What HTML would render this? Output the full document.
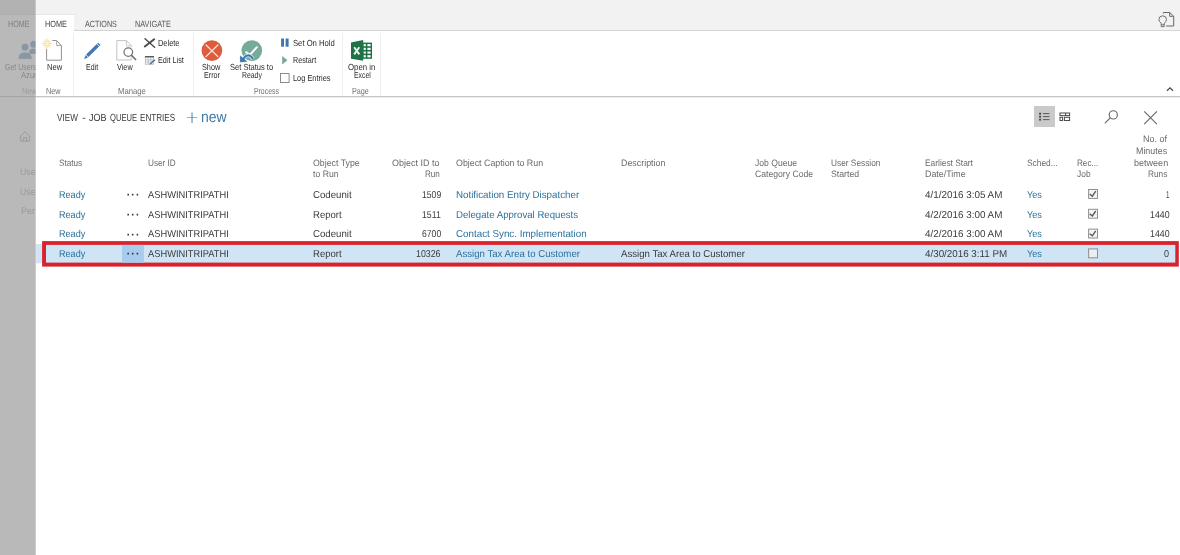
<!DOCTYPE html>
<html lang="en">
<head>
<meta charset="utf-8">
<title>View - Job Queue Entries</title>
<style>
html,body{margin:0;padding:0;}
body{width:1180px;height:555px;position:relative;overflow:hidden;background:#fff;font-family:"Liberation Sans",sans-serif;text-rendering:geometricPrecision;}
#page{position:absolute;left:0;top:0;width:1180px;height:555px;overflow:hidden;background:#fff;will-change:transform;}
.abs{position:absolute;}
.t{position:absolute;line-height:1;white-space:nowrap;transform-origin:0 50%;}
#topbar{left:0;top:0;width:1180px;height:30px;background:#f2f2f2;}
#tabline{left:0;top:30px;width:1180px;height:1px;background:#d4d4d4;}
#acttab{left:36px;top:15px;width:38px;height:16px;background:#fff;}
#acttabtop{left:36px;top:14px;width:40px;height:1px;background:#e6e6e6;}
#ribline{left:0;top:96px;width:1180px;height:1px;background:#c6c6c6;}
#ribline2{left:0;top:97px;width:1180px;height:1px;background:#ececec;}
.sep{position:absolute;top:33px;width:1px;height:63px;background:#efefef;}
#selstrip{left:36px;top:244.1px;width:7px;height:19.2px;background:#d2e5f5;}
#selrow{left:42px;top:241px;width:1137px;height:25.6px;box-sizing:border-box;border:4px solid #da222d;background:#cfe4f5;}
#selcell{left:122px;top:244.5px;width:21.7px;height:18.3px;background:#a8ccee;}
#viewbox{left:1034px;top:106px;width:21px;height:21px;background:#cacaca;}
.cb{position:absolute;width:8.7px;height:8.7px;border:1px solid #9a9a9a;background:#fff;box-sizing:border-box;}
#overlay{left:0;top:0;width:36px;height:555px;overflow:hidden;background:#b9b9b9;}
#ovtop{left:0;top:0;width:36px;height:14px;background:#b2b2b2;}
#ovtabline{left:0;top:14px;width:36px;height:1px;background:#adadad;}
#ovribline{left:0;top:96px;width:36px;height:1px;background:#a3a3a3;}
svg{position:absolute;overflow:visible;}
</style>
</head>
<body>
<div id="page">
<div class="abs" id="topbar"></div>
<div class="abs" id="tabline"></div>
<div class="abs" id="acttab"></div>
<div class="abs" id="acttabtop"></div>
<div class="abs" id="ribline"></div>
<div class="abs" id="ribline2"></div>
<div class="sep" style="left:73px"></div>
<div class="sep" style="left:193px"></div>
<div class="sep" style="left:342px"></div>
<div class="sep" style="left:380px"></div>

<svg width="1180" height="555" viewBox="0 0 1180 555" style="left:0;top:0">
<rect x="36" y="244.1" width="7" height="19.2" fill="#d2e5f5"/>
<rect x="42.1" y="241.1" width="1136.7" height="25.5" fill="#da222d"/>
<rect x="46" y="244.9" width="1129.3" height="17.7" fill="#cfe4f5"/>
<rect x="122" y="244.9" width="21.9" height="17.7" fill="#a8ccee"/>
</svg>
<div class="abs" id="viewbox"></div>

<svg width="1180" height="555" viewBox="0 0 1180 555" style="left:0;top:0">
<!-- New document icon -->
<g fill="none" stroke="#858585" stroke-width="0.9">
<path d="M52.3 40.5 H56.5 L61.4 45.7 V60.2 H46.6 V48.8"/>
<path d="M56.7 40.7 V45.6 H61.2" stroke="#9a9a9a"/>
</g>
<path d="M48.30 43.50L51.70 43.50M48.14 44.10L50.74 45.60M47.70 44.54L49.20 47.14M47.10 44.70L47.10 48.10M46.50 44.54L45.00 47.14M46.06 44.10L43.46 45.60M45.90 43.50L42.50 43.50M46.06 42.90L43.46 41.40M46.50 42.46L45.00 39.86M47.10 42.30L47.10 38.90M47.70 42.46L49.20 39.86M48.14 42.90L50.74 41.40" stroke="#f0d98a" stroke-width="0.85" stroke-linecap="round" fill="none"/>
<circle cx="47.1" cy="43.5" r="2.1" fill="#fbefb4"/>
<circle cx="47.1" cy="43.5" r="1" fill="#fff7cf"/>
<!-- Edit pencil -->
<g fill="#4078b2">
<path d="M86.1 54.6 L96.8 44.1 L99.1 46.5 L88.4 57 Z"/>
<path d="M97.2 43.7 L98.3 42.7 L100.6 45.1 L99.5 46.1 Z"/>
<path d="M85.7 55 L88 57.4 L84.1 58.9 Z"/>
</g>
<!-- View icon -->
<g fill="none" stroke="#bcbcbc" stroke-width="0.9">
<path d="M126.4 40.6 H116.8 V60 H131.3 V57.5"/>
<path d="M126.4 40.6 L131.3 45.8 V47.2"/>
<path d="M126.4 40.6 V45.8 H131.3" stroke="#c4c4c4"/>
</g>
<circle cx="128.3" cy="52.1" r="4.3" fill="#fff" stroke="#727272" stroke-width="1.2"/>
<path d="M131.5 55.4 L135.6 59.5" stroke="#727272" stroke-width="1.7" stroke-linecap="round"/>
<!-- Delete X -->
<path d="M145 38.7 L154.6 47.2" stroke="#4a4a4a" stroke-width="1.4" stroke-linecap="round"/>
<path d="M154.2 39.3 L144.8 46.5" stroke="#4a4a4a" stroke-width="2" stroke-linecap="round"/>
<!-- Edit list icon -->
<rect x="144.9" y="56" width="9.1" height="1.8" fill="#5a5a5a"/>
<g fill="none" stroke="#b9b2ae" stroke-width="0.8">
<rect x="145.3" y="57.6" width="8.3" height="6.6"/>
<path d="M145.3 59.9H153.6M145.3 62H153.6M148.1 57.6V64.2M150.9 57.6V64.2"/>
</g>
<path d="M148.9 65.3 L149.6 63.2 L154.2 58.9 L155.6 60.3 L151 64.6 Z" fill="#44709a" stroke="#fff" stroke-width="0.5"/>
<!-- Show error -->
<circle cx="211.9" cy="50.6" r="10.35" fill="#de5b3d"/>
<path d="M206 45 L217.9 56.6 M217.9 45 L206 56.6" stroke="#fbe6da" stroke-width="1.3" stroke-linecap="round"/>
<!-- Set status to ready -->
<circle cx="251.8" cy="50.6" r="10.35" fill="#75ab9b"/>
<path d="M245.5 51.7 L249.8 54.9 L257.4 46.6" fill="none" stroke="#fff" stroke-width="2"/>
<path d="M243 59.2 Q247.8 51.6 253.2 58.9" stroke="#e6f1ef" stroke-width="3.4" fill="none"/>
<path d="M239.5 54.8 V63 L248.2 62.1 Z" fill="#e6f1ef"/>
<path d="M243 59.2 Q247.8 51.6 253.2 58.9" stroke="#3b78b1" stroke-width="1.9" fill="none"/>
<path d="M240.1 55.6 V62.3 L247.3 61.6 Z" fill="#3b78b1"/>
<!-- Pause -->
<rect x="281.1" y="38.5" width="2.9" height="8.2" fill="#4076ae"/>
<rect x="285.6" y="38.5" width="3" height="8.2" fill="#4076ae"/>
<!-- Play -->
<path d="M282.2 56 L287.5 60.2 L282.2 64.4 Z" fill="#77a999"/>
<!-- Log entries checkbox -->
<rect x="280.5" y="73.5" width="8.6" height="9" fill="#fff" stroke="#8c8c8c" stroke-width="1"/>
<!-- Excel -->
<rect x="362.5" y="42.6" width="9.5" height="16.2" fill="#1f7246"/>
<g fill="#fff">
<rect x="363.6" y="44.1" width="2.2" height="2.1"/><rect x="367.4" y="44.1" width="3.2" height="2.1"/>
<rect x="363.6" y="47.8" width="2.2" height="2.1"/><rect x="367.4" y="47.8" width="3.2" height="2.1"/>
<rect x="363.6" y="51.5" width="2.2" height="2.1"/><rect x="367.4" y="51.5" width="3.2" height="2.1"/>
<rect x="363.6" y="55.2" width="2.2" height="2.1"/><rect x="367.4" y="55.2" width="3.2" height="2.1"/>
</g>
<path d="M351 42.6 L363.2 40.1 V60.8 L351 58.8 Z" fill="#1f7246"/>
<path d="M354.2 47.2 L359.3 54.4 M359.3 47.2 L354.2 54.4" stroke="#eef6f1" stroke-width="1.9"/>
<!-- list icon -->
<g fill="#4a4a4a">
<rect x="1039.1" y="112.7" width="2" height="1.9"/><rect x="1039.1" y="115.7" width="2" height="1.9"/><rect x="1039.1" y="118.7" width="2" height="1.9"/>
<rect x="1042.9" y="113.2" width="6.6" height="0.9"/><rect x="1042.9" y="116.2" width="6.6" height="0.9"/><rect x="1042.9" y="119.2" width="6.6" height="0.9"/>
</g>
<!-- tiles icon -->
<g fill="none" stroke="#4a4a4a" stroke-width="1">
<rect x="1060" y="113" width="9.6" height="2.6"/>
<path d="M1065.6 113 V115.6"/>
<rect x="1060" y="117.3" width="2.6" height="3.2"/>
<rect x="1064.4" y="117.3" width="5.2" height="3.2"/>
</g>
<!-- search -->
<circle cx="1113.3" cy="114.9" r="4.1" fill="none" stroke="#666" stroke-width="1.1"/>
<path d="M1110.3 117.9 L1105.2 122.8" stroke="#666" stroke-width="1.15" stroke-linecap="round"/>
<!-- close X -->
<path d="M1144.2 111.3 L1156.9 124.1 M1156.9 111.3 L1144.2 124.1" stroke="#666" stroke-width="1.1"/>
<!-- lightbulb / doc icon -->
<g fill="none" stroke="#666" stroke-width="1">
<path d="M1163.4 13.6 V12.5 H1169.7 L1173.7 16.3 V26 H1166.2"/>
<path d="M1169.7 12.5 V16.3 H1173.7"/>
<path d="M1161.2 23.2 Q1158.9 21.6 1158.9 19.6 A3.8 3.8 0 0 1 1166.5 19.6 Q1166.5 21.6 1164.2 23.2 V26.7 H1161.2 Z M1161.2 24.8 H1164.2" stroke="#707070"/>
</g>
<!-- collapse caret -->
<path d="M1167 90.8 L1170 87.8 L1173 90.8" fill="none" stroke="#4a4a4a" stroke-width="1.3"/>
<!-- row checkboxes -->
<g fill="#f4f4f4" stroke="#8f8f8f" stroke-width="1">
<rect x="1088.6" y="189.5" width="8.9" height="8.9"/>
<rect x="1088.6" y="209.3" width="8.9" height="8.9"/>
<rect x="1088.6" y="229.1" width="8.9" height="8.9"/>
<rect x="1088.6" y="248.9" width="8.9" height="8.9" fill="#e9eef2"/>
</g>
<g fill="none" stroke="#5c5c5c" stroke-width="1.4">
<path d="M1089.7 194.1 L1092.4 196.2 L1095.7 191.2"/>
<path d="M1089.7 213.9 L1092.4 216 L1095.7 211"/>
<path d="M1089.7 233.7 L1092.4 235.8 L1095.7 230.8"/>
</g>
</svg>


<span class="t" style="left:185px;top:109px;font-family:'DejaVu Sans','Liberation Sans',sans-serif;font-weight:200;font-size:16.8px;color:#2f719b">+</span>
<span class="t" style="left:125.4px;top:187px;font-size:16px;letter-spacing:-0.63px;color:#333">···</span>
<span class="t" style="left:125.4px;top:207px;font-size:16px;letter-spacing:-0.63px;color:#333">···</span>
<span class="t" style="left:125.4px;top:227px;font-size:16px;letter-spacing:-0.63px;color:#333">···</span>
<span class="t" style="left:125.4px;top:246px;font-size:16px;letter-spacing:-0.63px;color:#333">···</span>
<span class="t" style="left:45.00px;top:20px;font-size:9px;color:#444;transform:scaleX(0.8112)">HOME</span>
<span class="t" style="left:84.70px;top:20px;font-size:9px;color:#555;transform:scaleX(0.7975)">ACTIONS</span>
<span class="t" style="left:134.80px;top:20px;font-size:9px;color:#555;transform:scaleX(0.8105)">NAVIGATE</span>
<span class="t" style="left:46.60px;top:63px;font-size:8.8px;color:#2c2c2c;transform:scaleX(0.8660)">New</span>
<span class="t" style="left:86.00px;top:63px;font-size:8.8px;color:#2c2c2c;transform:scaleX(0.8018)">Edit</span>
<span class="t" style="left:116.60px;top:63px;font-size:8.8px;color:#2c2c2c;transform:scaleX(0.8284)">View</span>
<span class="t" style="left:202.20px;top:63px;font-size:8.8px;color:#2c2c2c;transform:scaleX(0.8299)">Show</span>
<span class="t" style="left:203.50px;top:71px;font-size:8.8px;color:#2c2c2c;transform:scaleX(0.8155)">Error</span>
<span class="t" style="left:230.30px;top:63px;font-size:8.8px;color:#2c2c2c;transform:scaleX(0.8559)">Set Status to</span>
<span class="t" style="left:242.00px;top:71px;font-size:8.8px;color:#2c2c2c;transform:scaleX(0.7799)">Ready</span>
<span class="t" style="left:348.00px;top:63px;font-size:8.8px;color:#2c2c2c;transform:scaleX(0.8862)">Open in</span>
<span class="t" style="left:353.50px;top:71px;font-size:8.8px;color:#2c2c2c;transform:scaleX(0.7793)">Excel</span>
<span class="t" style="left:158.40px;top:39px;font-size:8.8px;color:#2c2c2c;transform:scaleX(0.8459)">Delete</span>
<span class="t" style="left:158.40px;top:56px;font-size:8.8px;color:#2c2c2c;transform:scaleX(0.8258)">Edit List</span>
<span class="t" style="left:293.00px;top:39px;font-size:8.8px;color:#2c2c2c;transform:scaleX(0.8724)">Set On Hold</span>
<span class="t" style="left:293.40px;top:56px;font-size:8.8px;color:#2c2c2c;transform:scaleX(0.8163)">Restart</span>
<span class="t" style="left:293.00px;top:74px;font-size:8.8px;color:#2c2c2c;transform:scaleX(0.8425)">Log Entries</span>
<span class="t" style="left:46.00px;top:87px;font-size:8.8px;color:#707070;transform:scaleX(0.8221)">New</span>
<span class="t" style="left:118.00px;top:87px;font-size:8.8px;color:#707070;transform:scaleX(0.8778)">Manage</span>
<span class="t" style="left:254.20px;top:87px;font-size:8.8px;color:#707070;transform:scaleX(0.7814)">Process</span>
<span class="t" style="left:352.40px;top:87px;font-size:8.8px;color:#707070;transform:scaleX(0.8183)">Page</span>
<span class="t" style="left:57.00px;top:114px;font-size:10.3px;color:#3a3a3a;transform:scaleX(0.7933)">VIEW</span>
<span class="t" style="left:82.40px;top:114px;font-size:10.3px;color:#3a3a3a;transform:scaleX(1.1333)">-</span>
<span class="t" style="left:88.80px;top:114px;font-size:10.3px;color:#3a3a3a;transform:scaleX(0.8731)">JOB</span>
<span class="t" style="left:109.50px;top:114px;font-size:10.3px;color:#3a3a3a;transform:scaleX(0.7374)">QUEUE</span>
<span class="t" style="left:140.00px;top:114px;font-size:10.3px;color:#3a3a3a;transform:scaleX(0.7887)">ENTRIES</span>
<span class="t" style="left:200.89px;top:110px;font-size:15.4px;color:#3b7ba4;transform:scaleX(0.9069)">new</span>
<span class="t" style="left:58.90px;top:159px;font-size:9.3px;color:#6a6a6a;transform:scaleX(0.8761)">Status</span>
<span class="t" style="left:148.00px;top:159px;font-size:9.3px;color:#6a6a6a;transform:scaleX(0.8806)">User ID</span>
<span class="t" style="left:313.20px;top:159px;font-size:9.3px;color:#6a6a6a;transform:scaleX(0.9438)">Object Type</span>
<span class="t" style="left:313.20px;top:170px;font-size:9.3px;color:#6a6a6a;transform:scaleX(0.9331)">to Run</span>
<span class="t" style="left:392.00px;top:159px;font-size:9.3px;color:#6a6a6a;transform:scaleX(0.9670)">Object ID to</span>
<span class="t" style="left:424.60px;top:170px;font-size:9.3px;color:#6a6a6a;transform:scaleX(0.8706)">Run</span>
<span class="t" style="left:455.90px;top:159px;font-size:9.3px;color:#6a6a6a;transform:scaleX(0.9518)">Object Caption to Run</span>
<span class="t" style="left:621.10px;top:159px;font-size:9.3px;color:#6a6a6a;transform:scaleX(0.9540)">Description</span>
<span class="t" style="left:755.10px;top:159px;font-size:9.3px;color:#6a6a6a;transform:scaleX(0.9246)">Job Queue</span>
<span class="t" style="left:755.10px;top:170px;font-size:9.3px;color:#6a6a6a;transform:scaleX(0.9285)">Category Code</span>
<span class="t" style="left:830.90px;top:159px;font-size:9.3px;color:#6a6a6a;transform:scaleX(0.8945)">User Session</span>
<span class="t" style="left:830.90px;top:170px;font-size:9.3px;color:#6a6a6a;transform:scaleX(0.9361)">Started</span>
<span class="t" style="left:924.80px;top:159px;font-size:9.3px;color:#6a6a6a;transform:scaleX(0.9006)">Earliest Start</span>
<span class="t" style="left:924.80px;top:170px;font-size:9.3px;color:#6a6a6a;transform:scaleX(0.9560)">Date/Time</span>
<span class="t" style="left:1027.40px;top:159px;font-size:9.3px;color:#6a6a6a;transform:scaleX(0.8978)">Sched...</span>
<span class="t" style="left:1076.50px;top:159px;font-size:9.3px;color:#6a6a6a;transform:scaleX(0.8735)">Rec...</span>
<span class="t" style="left:1076.50px;top:170px;font-size:9.3px;color:#6a6a6a;transform:scaleX(0.9042)">Job</span>
<span class="t" style="left:1143.40px;top:135px;font-size:9.3px;color:#6a6a6a;transform:scaleX(0.9635)">No. of</span>
<span class="t" style="left:1136.30px;top:147px;font-size:9.3px;color:#6a6a6a;transform:scaleX(0.9543)">Minutes</span>
<span class="t" style="left:1133.70px;top:159px;font-size:9.3px;color:#6a6a6a;transform:scaleX(0.9720)">between</span>
<span class="t" style="left:1148.10px;top:170px;font-size:9.3px;color:#6a6a6a;transform:scaleX(0.8887)">Runs</span>
<span class="t" style="left:58.60px;top:191px;font-size:10px;color:#2a719b;transform:scaleX(0.9064)">Ready</span>
<span class="t" style="left:147.90px;top:191px;font-size:10px;color:#3a3a3a;transform:scaleX(0.9306)">ASHWINITRIPATHI</span>
<span class="t" style="left:313.20px;top:191px;font-size:10px;color:#3a3a3a;transform:scaleX(0.9664)">Codeunit</span>
<span class="t" style="left:421.50px;top:191px;font-size:10px;color:#3a3a3a;transform:scaleX(0.8640)">1509</span>
<span class="t" style="left:455.90px;top:191px;font-size:10px;color:#2a719b;transform:scaleX(0.9761)">Notification Entry Dispatcher</span>
<span class="t" style="left:924.80px;top:191px;font-size:10px;color:#3a3a3a;transform:scaleX(0.9877)">4/1/2016 3:05 AM</span>
<span class="t" style="left:1027.40px;top:191px;font-size:10px;color:#2a719b;transform:scaleX(0.9134)">Yes</span>
<span class="t" style="left:1165.50px;top:191px;font-size:10px;color:#3a3a3a;transform:scaleX(0.6167)">1</span>
<span class="t" style="left:58.60px;top:211px;font-size:10px;color:#2a719b;transform:scaleX(0.9064)">Ready</span>
<span class="t" style="left:147.90px;top:211px;font-size:10px;color:#3a3a3a;transform:scaleX(0.9306)">ASHWINITRIPATHI</span>
<span class="t" style="left:313.20px;top:211px;font-size:10px;color:#3a3a3a;transform:scaleX(0.9525)">Report</span>
<span class="t" style="left:421.50px;top:211px;font-size:10px;color:#3a3a3a;transform:scaleX(0.8705)">1511</span>
<span class="t" style="left:455.90px;top:211px;font-size:10px;color:#2a719b;transform:scaleX(0.9633)">Delegate Approval Requests</span>
<span class="t" style="left:924.80px;top:211px;font-size:10px;color:#3a3a3a;transform:scaleX(0.9877)">4/2/2016 3:00 AM</span>
<span class="t" style="left:1027.40px;top:211px;font-size:10px;color:#2a719b;transform:scaleX(0.9134)">Yes</span>
<span class="t" style="left:1149.50px;top:211px;font-size:10px;color:#3a3a3a;transform:scaleX(0.8772)">1440</span>
<span class="t" style="left:58.60px;top:230px;font-size:10px;color:#2a719b;transform:scaleX(0.9064)">Ready</span>
<span class="t" style="left:147.90px;top:230px;font-size:10px;color:#3a3a3a;transform:scaleX(0.9306)">ASHWINITRIPATHI</span>
<span class="t" style="left:313.20px;top:230px;font-size:10px;color:#3a3a3a;transform:scaleX(0.9664)">Codeunit</span>
<span class="t" style="left:421.50px;top:230px;font-size:10px;color:#3a3a3a;transform:scaleX(0.8640)">6700</span>
<span class="t" style="left:455.90px;top:230px;font-size:10px;color:#2a719b;transform:scaleX(0.9794)">Contact Sync. Implementation</span>
<span class="t" style="left:924.80px;top:230px;font-size:10px;color:#3a3a3a;transform:scaleX(0.9877)">4/2/2016 3:00 AM</span>
<span class="t" style="left:1027.40px;top:230px;font-size:10px;color:#2a719b;transform:scaleX(0.9134)">Yes</span>
<span class="t" style="left:1149.50px;top:230px;font-size:10px;color:#3a3a3a;transform:scaleX(0.8772)">1440</span>
<span class="t" style="left:58.60px;top:250px;font-size:10px;color:#2a719b;transform:scaleX(0.9064)">Ready</span>
<span class="t" style="left:147.90px;top:250px;font-size:10px;color:#3a3a3a;transform:scaleX(0.9306)">ASHWINITRIPATHI</span>
<span class="t" style="left:313.20px;top:250px;font-size:10px;color:#3a3a3a;transform:scaleX(0.9525)">Report</span>
<span class="t" style="left:416.20px;top:250px;font-size:10px;color:#3a3a3a;transform:scaleX(0.8815)">10326</span>
<span class="t" style="left:455.90px;top:250px;font-size:10px;color:#2a719b;transform:scaleX(0.9626)">Assign Tax Area to Customer</span>
<span class="t" style="left:621.10px;top:250px;font-size:10px;color:#3a3a3a;transform:scaleX(0.9626)">Assign Tax Area to Customer</span>
<span class="t" style="left:924.80px;top:250px;font-size:10px;color:#3a3a3a;transform:scaleX(0.9804)">4/30/2016 3:11 PM</span>
<span class="t" style="left:1027.40px;top:250px;font-size:10px;color:#2a719b;transform:scaleX(0.9134)">Yes</span>
<span class="t" style="left:1164.00px;top:250px;font-size:10px;color:#3a3a3a;transform:scaleX(0.9000)">0</span>

<div class="abs" id="overlay">
<div class="abs" id="ovtop"></div>
<div class="abs" id="ovtabline"></div>
<div class="abs" id="ovribline"></div>
<svg width="36" height="555" viewBox="0 0 36 555" style="left:0;top:0">
<!-- users icon -->
<g fill="#8996a4">
<circle cx="33.7" cy="44.3" r="3.5"/>
<path d="M28.3 54 Q28.8 48.6 33.7 48.6 Q38.6 48.6 39.2 54 Z"/>
</g>
<g fill="#8996a4" stroke="#bababa" stroke-width="0.7">
<circle cx="25" cy="47.2" r="3.9"/>
<path d="M18 59.3 Q18.2 52 25.1 52 Q32 52 32.3 59.3 Z"/>
</g>
<!-- home icon -->
<g fill="none" stroke="#9b9b9b" stroke-width="1">
<path d="M19.8 137 L25.1 131.8 L30.2 137"/>
<path d="M20.8 136.4 V141.2 H29.3 V136.4"/>
<path d="M23.6 141.2 V137.7 H26.5 V141.2"/>
</g>
</svg>

<span class="t" style="left:7.60px;top:20px;font-size:9px;color:#808080;transform:scaleX(0.7927)">HOME</span>
<span class="t" style="left:4.50px;top:63px;font-size:8.8px;color:#888888;transform:scaleX(0.7911)">Get Users</span>
<span class="t" style="left:20.60px;top:71px;font-size:8.8px;color:#888888;transform:scaleX(0.8646)">Azur</span>
<span class="t" style="left:21.60px;top:87px;font-size:8.8px;color:#9a9a9a;transform:scaleX(0.8167)">New</span>
<span class="t" style="left:20.30px;top:168px;font-size:9.6px;color:#9b9b9b;transform:scaleX(0.9148)">Use</span>
<span class="t" style="left:20.30px;top:188px;font-size:9.6px;color:#9b9b9b;transform:scaleX(0.9148)">Use</span>
<span class="t" style="left:20.50px;top:207px;font-size:9.6px;color:#9b9b9b;transform:scaleX(0.9406)">Per</span>
<div class="abs" style="left:35px;top:0;width:1px;height:555px;background:rgba(255,255,255,0.28)"></div>
</div>
</div>
</body>
</html>
